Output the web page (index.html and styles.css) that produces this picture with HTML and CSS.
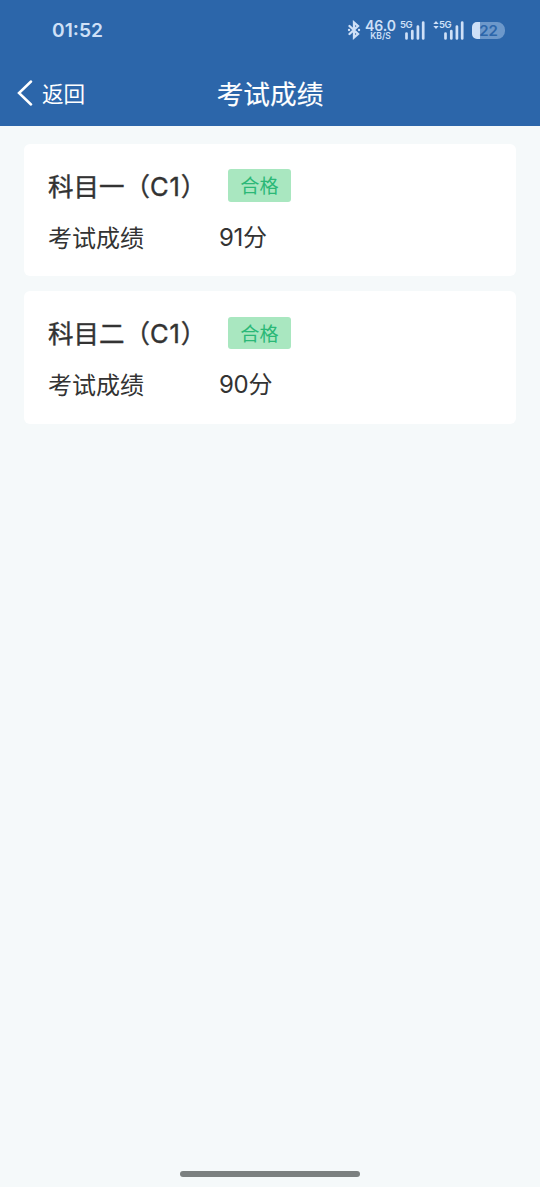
FILE: index.html
```html
<!DOCTYPE html>
<html lang="zh-CN">
<head>
<meta charset="utf-8">
<meta name="viewport" content="width=device-width">
<title>考试成绩</title>
<link rel="stylesheet" href="styles.css">
</head>
<body>
<header class="header">
  <div class="status">
    <span class="time">01:52</span>
    <div class="indicators">
      <svg class="bluetooth" width="14" height="20" viewBox="0 0 14 20"><path d="M2.500 6 11 14 7 17.500v-15L11 6l-8.500 8"/><path d="M2 10h.1M12 10h.1"/></svg>
      <div class="speed"><span class="rate">46.0</span><span class="unit">KB/S</span></div>
      <div class="signal">
        <span class="network">5G</span>
        <svg class="bars" width="20" height="19" viewBox="0 0 20 19"><path d="M1.500 12.500V17.500M7.300 10V17.500M12.900 5.500V17.500M18.200 1.500V17.500"/></svg>
      </div>
      <div class="signal second">
        <span class="network">5G</span>
        <svg class="bars" width="20" height="19" viewBox="0 0 20 19"><path d="M1.500 12.500V17.500M7.300 10V17.500M12.900 5.500V17.500M18.200 1.500V17.500"/></svg>
        <svg class="arrows" width="6" height="8" viewBox="0 0 6 8"><path d="M0.300 3 3 0l2.700 3zM.3 5 3 8l2.700-3z"/></svg>
      </div>
      <div class="battery"><span class="level">22</span></div>
    </div>
  </div>
  <nav class="nav">
    <a class="back"><svg class="chevron" width="16" height="26" viewBox="0 0 16 26"><path d="M14 1.500 2 13l12 11.500"/></svg><span>返回</span></a>
    <h1 class="title">考试成绩</h1>
  </nav>
</header>
<main class="results">
  <section class="card">
    <div class="row"><h2 class="subject">科目一（<span class="code">C1</span>）</h2><span class="badge">合格</span></div>
    <div class="row score-row"><span class="label">考试成绩</span><span class="score"><span class="number">91</span>分</span></div>
  </section>
  <section class="card">
    <div class="row"><h2 class="subject">科目二（<span class="code">C1</span>）</h2><span class="badge">合格</span></div>
    <div class="row score-row"><span class="label">考试成绩</span><span class="score"><span class="number">90</span>分</span></div>
  </section>
</main>
<div class="home-bar"></div>
</body>
</html>
```
FILE: styles.css
```css
* { box-sizing: border-box; }
body {
  margin: 0;
  height: 1187px;
  display: flex;
  flex-direction: column;
  background: #f5f9fa;
  color: #333;
  font-family: "Noto Sans CJK SC", sans-serif;
}
.header { height: 126px; background: #2c66aa; color: #fff; }
.status {
  height: 60px;
  padding: 0 35px 0 52px;
  display: flex;
  align-items: center;
  justify-content: space-between;
  color: #cfe0f7;
  font-family: Inter, sans-serif;
}
.time { font-size: 19.200px; font-weight: 600; }
.indicators { display: flex; align-items: center; }
.bluetooth { margin-right: 4px; fill: none; stroke: currentColor; stroke-width: 2.300; stroke-linecap: round; }
.speed { width: 31px; display: flex; flex-direction: column; align-items: center; font-weight: 600; }
.rate { font-size: 14px; line-height: 12px; }
.unit { font-size: 8.500px; line-height: 8px; }
.signal { position: relative; width: 25px; height: 19px; margin-left: 4px; display: flex; justify-content: flex-end; }
.second { width: 31px; margin-left: 8px; }
.bars { fill: none; stroke: currentColor; stroke-width: 2.700; stroke-linecap: round; }
.network { position: absolute; left: 0; top: -1px; font-size: 9.500px; line-height: 9px; font-weight: 600; letter-spacing: -.5px; }
.second .network { left: 6px; }
.arrows { position: absolute; left: 0; top: 0; fill: currentColor; }
.battery {
  width: 33px;
  height: 17px;
  margin-left: 8px;
  border-radius: 5px 8px 8px 5px;
  background: linear-gradient(90deg, #cfe0f7 8px, #6d98ca 8px);
  color: #2c66aa;
  text-align: center;
}
.level { display: block; font-size: 15px; line-height: 17px; font-weight: 600; }
.nav {
  height: 66px;
  padding: 0 17px;
  display: grid;
  grid-template-columns: 1fr auto 1fr;
  align-items: center;
}
.back { display: flex; align-items: center; gap: 9px; font-size: 21.600px; line-height: 32px; }
.chevron { fill: none; stroke: currentColor; stroke-width: 2.500; stroke-linecap: round; }
.title { margin: 0; font-size: 26.700px; line-height: 40px; font-weight: 400; -webkit-text-stroke: .15px; }
.results { flex: 1; padding: 18px 24px; display: flex; flex-direction: column; gap: 15px; }
.card { height: 132.400px; padding: 25px 24px; border-radius: 6px; background: #fff; }
.row { height: 33px; display: flex; align-items: center; }
.subject { width: 180px; margin: 0; padding-bottom: 1px; white-space: nowrap; font-size: 25.500px; line-height: 33px; font-weight: 400; -webkit-text-stroke: .4px; }
.code { font-family: Inter, sans-serif; letter-spacing: .8px; }
.badge {
  width: 63px;
  height: 32.400px;
  border-radius: 3px;
  background: #a9e7c0;
  color: #2bb877;
  font-size: 19.200px;
  line-height: 33px;
  text-align: center;
}
.score-row { margin-top: 18px; font-size: 24px; line-height: 33px; }
.label { width: 171px; padding-bottom: 1px; }
.score { letter-spacing: -.3px; }
.number { font-family: Inter, sans-serif; }
.home-bar { width: 180px; height: 6px; margin: 0 auto 10.500px; border-radius: 3px; background: #7b8080; }
```
